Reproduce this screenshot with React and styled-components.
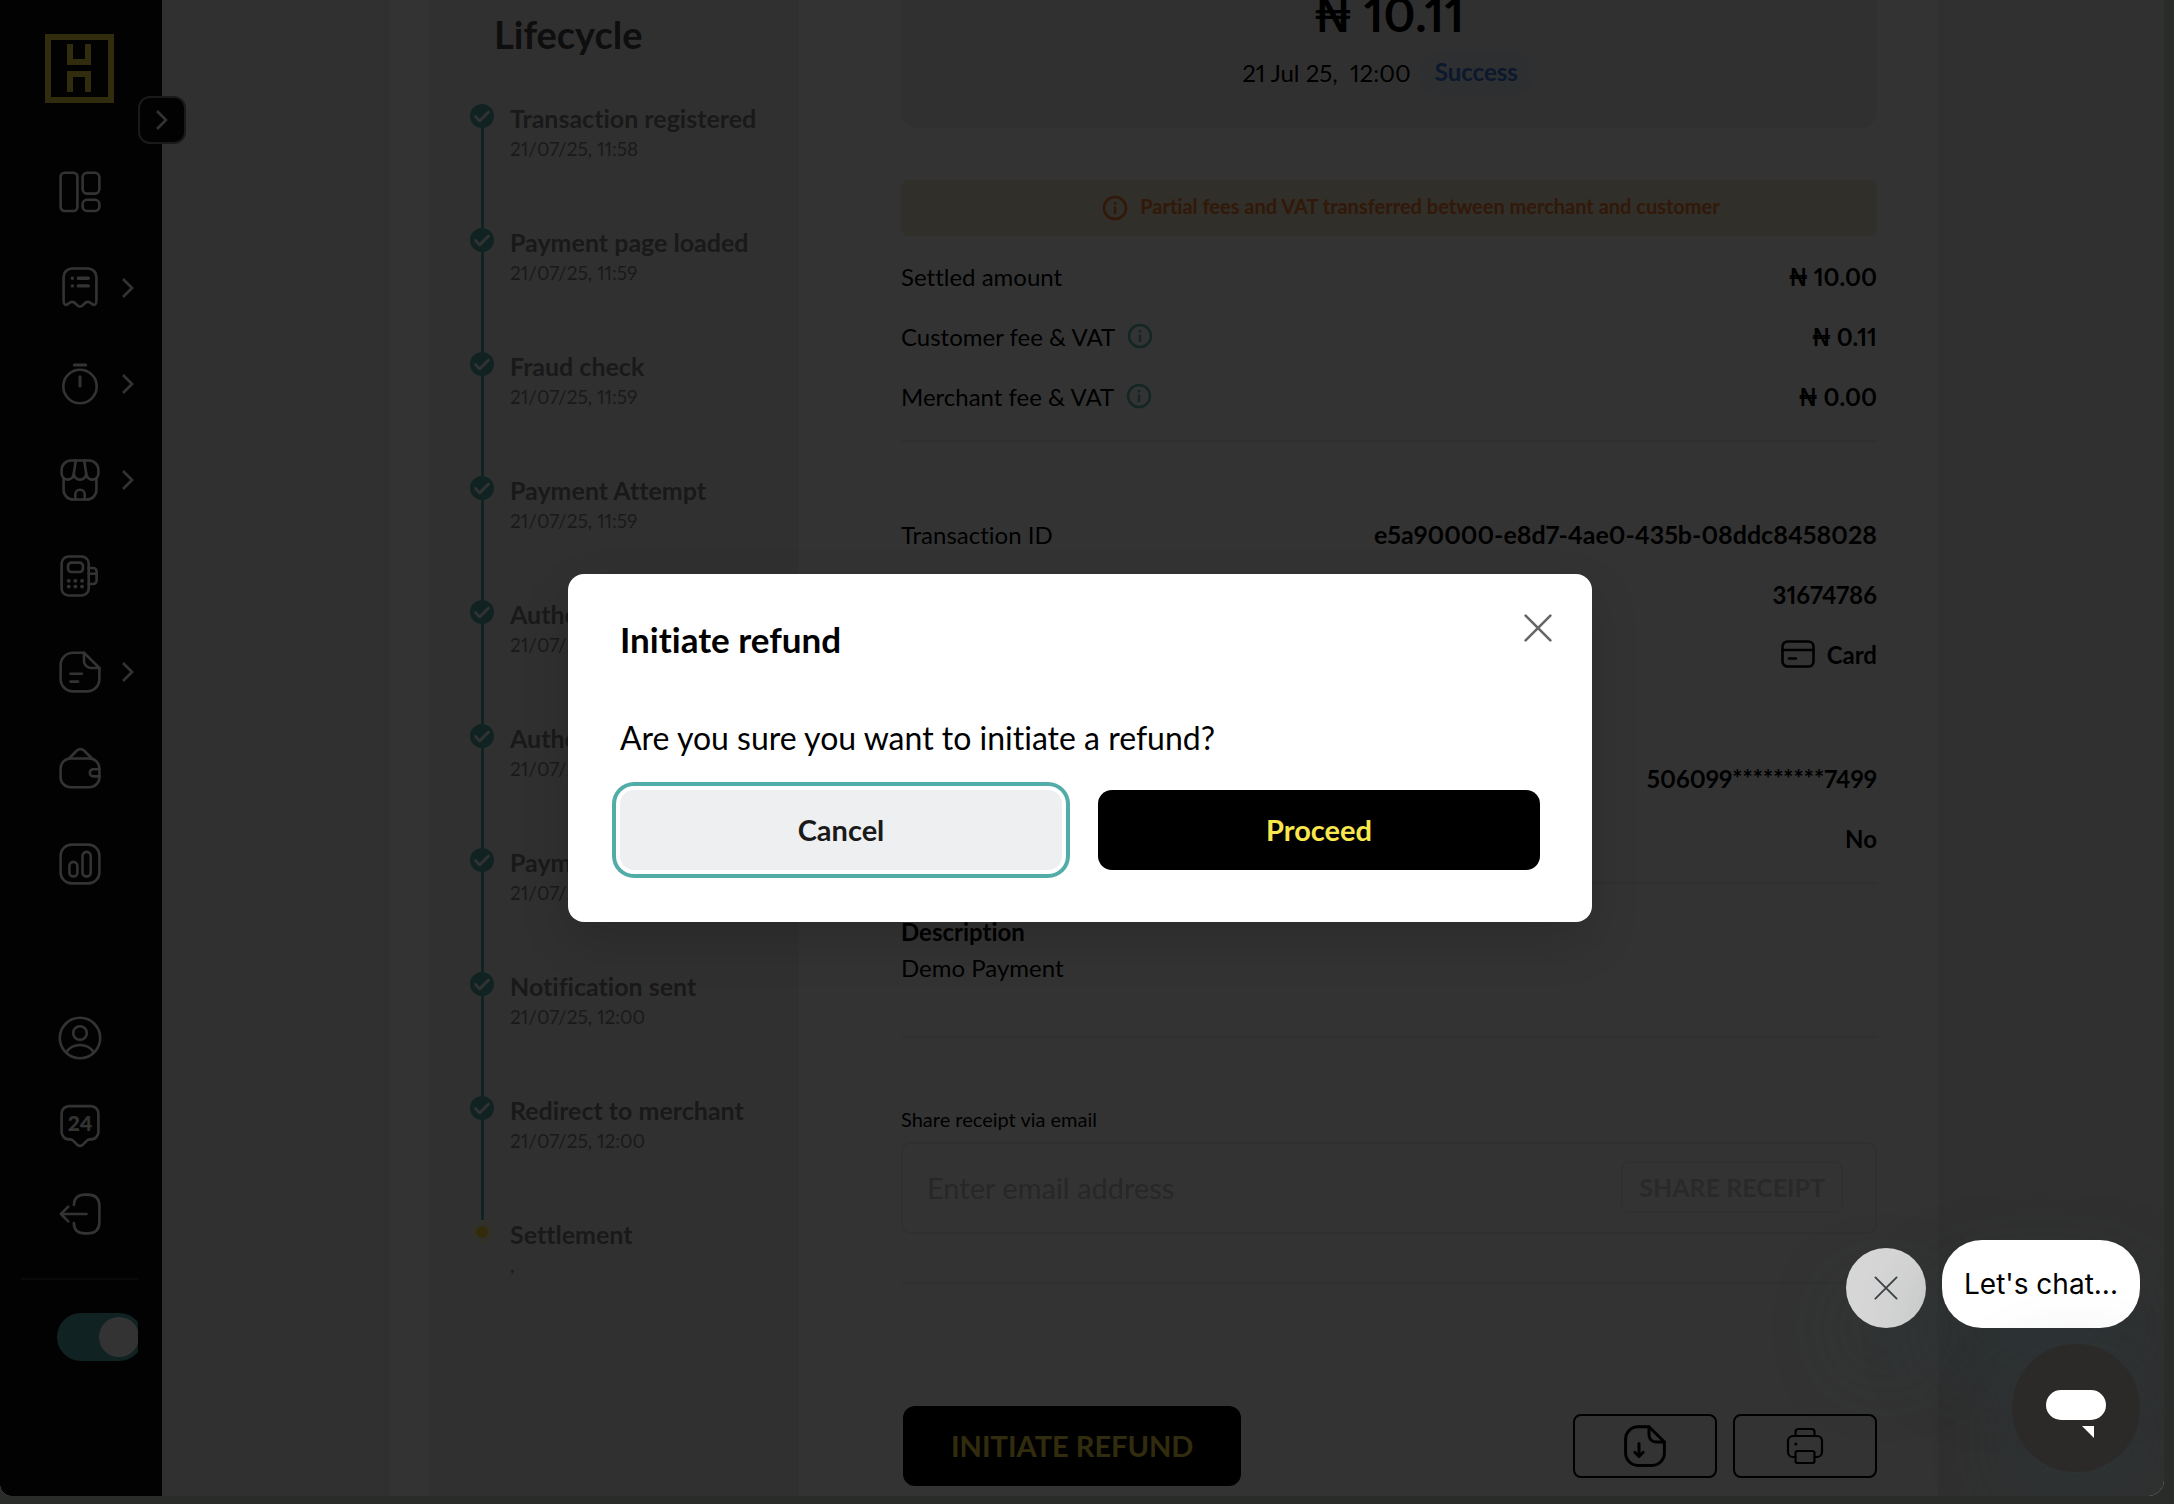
import React from 'react'
import styled, { createGlobalStyle } from 'styled-components'

const GlobalStyle = createGlobalStyle`
  * {
    box-sizing: border-box;
  }
  body {
    margin: 0;
    background: #2a2c29;
    color: #000;
    font-family: Lato, "Open Sans", sans-serif;
    font-size: 24px;
    font-variant-ligatures: none;
    font-variant-numeric: proportional-nums;
    overflow: hidden;
  }
  button, input {
    font-family: inherit;
  }
  h1, h2, p, ul, ol, dl, dd {
    margin: 0;
    padding: 0;
  }
  ul, ol {
    list-style: none;
  }
`

const navItems = [
  { name: 'Dashboard', icon: 'dashboard' },
  { name: 'Transactions', icon: 'receipt', more: true },
  { name: 'Settlements', icon: 'timer', more: true },
  { name: 'Store', icon: 'shop', more: true },
  { name: 'Terminals', icon: 'terminal' },
  { name: 'Invoices', icon: 'note', more: true },
  { name: 'Wallet', icon: 'wallet' },
  { name: 'Reports', icon: 'chart' },
]

const accountItems = [
  { name: 'Profile', icon: 'user' },
  { name: 'Support', icon: 'support' },
  { name: 'Log out', icon: 'logout' },
]

const steps = [
  { title: 'Transaction registered', date: '21/07/25, 11:58', done: true },
  { title: 'Payment page loaded', date: '21/07/25, 11:59', done: true },
  { title: 'Fraud check', date: '21/07/25, 11:59', done: true },
  { title: 'Payment Attempt', date: '21/07/25, 11:59', done: true },
  { title: 'Authentication', date: '21/07/25, 11:59', done: true },
  { title: 'Authorization', date: '21/07/25, 11:59', done: true },
  { title: 'Payment status', date: '21/07/25, 12:00', done: true },
  { title: 'Notification sent', date: '21/07/25, 12:00', done: true },
  { title: 'Redirect to merchant', date: '21/07/25, 12:00', done: true },
  { title: 'Settlement', date: ',', done: false },
]

const fees = [
  { label: 'Settled amount', value: '₦ 10.00' },
  { label: 'Customer fee & VAT', value: '₦ 0.11', info: true },
  { label: 'Merchant fee & VAT', value: '₦ 0.00', info: true },
]

const icons = {
  dashboard: (
    <>
      <rect x="2.6" y="2.8" width="16.8" height="38.2" rx="4" />
      <rect x="24.6" y="2.8" width="16.8" height="20.8" rx="4.5" />
      <rect x="24.6" y="29.8" width="16.8" height="11.2" rx="4.5" />
    </>
  ),
  receipt: (
    <>
      <path d="M5.6 34.5V11a8.5 8.5 0 0 1 8.5-8.5h15.8a8.5 8.5 0 0 1 8.5 8.5v23.5c0 4.5-2.6 5.4-5 3c-2.4-2.3-5.2-2.2-7.4.6c-2.6 3.6-5.4 3.6-8 0c-2.2-2.8-5-2.9-7.4-.6c-2.4 2.4-5 1.5-5-3z" />
      <path d="M20.3 12.3h10M20.3 19.9h10M14.3 12.3h.1M14.3 19.9h.1" strokeWidth="3.4" />
    </>
  ),
  timer: (
    <>
      <circle cx="22" cy="24.5" r="16.7" />
      <path d="M16.3 2.9h11.4M22 14.8v9.2" strokeWidth="3" />
    </>
  ),
  shop: (
    <>
      <path d="M3.6 15.5a6.1 6.1 0 0 0 12.2 0a6.2 6.2 0 0 0 12.4 0a6.1 6.1 0 0 0 12.2 0V12a9.5 9.5 0 0 0-9.5-9.5H13.1A9.5 9.5 0 0 0 3.6 12z" />
      <path d="M17.8 2.5l-2 13M26.2 2.5l2 13" />
      <path d="M5.6 20.5V32a9.5 9.5 0 0 0 9.5 9.5h13.8a9.5 9.5 0 0 0 9.5-9.5V20.5" />
      <path d="M17.3 41.5v-5a4.7 4.7 0 0 1 9.4 0v5" />
    </>
  ),
  terminal: (
    <>
      <rect x="3.6" y="2.5" width="27.1" height="39" rx="7" />
      <rect x="10" y="8.6" width="15" height="9.4" rx="3.5" />
      <path d="M30.7 14h4.4a3.5 3.5 0 0 1 3.5 3.5v9a3.5 3.5 0 0 1-3.5 3.5h-4.4M30.7 19.8h8" />
      <path d="M10.7 26.8h.1M17.3 26.8h.1M24 26.8h.1M10.7 32.6h.1M17.3 32.6h.1M24 32.6h.1" strokeWidth="3.8" />
    </>
  ),
  note: (
    <>
      <path d="M26 2.8H15A12.4 12.4 0 0 0 2.6 15.2V29a12.4 12.4 0 0 0 12.4 12.4h14A12.4 12.4 0 0 0 41.4 29V18z" />
      <path d="M26 2.8V11a7 7 0 0 0 7 7h8.4M12.5 23.8h11.4M12.5 31.6h7.6" />
    </>
  ),
  wallet: (
    <>
      <rect x="2.6" y="12.5" width="38.8" height="28.7" rx="10" />
      <path d="M11 12.5L18.5 5q4-3.6 8 0L34 12.5M41.4 23.2h-6a3.6 3.6 0 0 0 0 7.2h6" />
    </>
  ),
  chart: (
    <>
      <rect x="2.6" y="2.6" width="38.8" height="38.8" rx="11" />
      <rect x="11.4" y="19.9" width="8" height="14.5" rx="4" />
      <rect x="24.5" y="9.9" width="8.2" height="24.5" rx="4" />
    </>
  ),
  user: (
    <>
      <circle cx="22" cy="22" r="20.2" />
      <circle cx="22" cy="17" r="6.8" />
      <path d="M8.5 36Q13 29 22 29T35.5 36" />
    </>
  ),
  support: (
    <>
      <path d="M11 2.1h22a7.4 7.4 0 0 1 7.4 7.4V28a7.4 7.4 0 0 1-7.4 7.4h-1q-2 0-3.4 1.4l-3.9 4q-2.7 2.4-5.4 0l-3.9-4q-1.4-1.4-3.4-1.4h-1A7.4 7.4 0 0 1 3.6 28V9.5A7.4 7.4 0 0 1 11 2.1z" />
      <text x="22" y="27" textAnchor="middle" fontSize="21" fontWeight="900" fill="currentColor" stroke="none">24</text>
    </>
  ),
  logout: (
    <>
      <path d="M15.9 13C15.9 6 20 2.6 27 2.6h2.5C37 2.6 41.4 6.5 41.4 14v16c0 7.5-4.4 11.4-11.9 11.4H27c-7 0-11.1-3.4-11.1-10.4" />
      <path d="M28.5 22H3M10.3 14.6L2.9 22l7.4 7.4" />
    </>
  ),
  download: (
    <>
      <path d="M26 2.8H15A12.4 12.4 0 0 0 2.6 15.2V29a12.4 12.4 0 0 0 12.4 12.4h14A12.4 12.4 0 0 0 41.4 29V18z" />
      <path d="M26 2.8V11a7 7 0 0 0 7 7h8.4M16 19.5V32M11.8 28.3l4.2 4.2l4.2-4.2" />
    </>
  ),
  printer: (
    <>
      <path d="M12.5 12V8a3 3 0 0 1 3-3h13a3 3 0 0 1 3 3v4" />
      <path d="M12.5 33H10a5 5 0 0 1-5-5V17a5 5 0 0 1 5-5h24a5 5 0 0 1 5 5v11a5 5 0 0 1-5 5h-2.500" />
      <rect x="12.5" y="27" width="19" height="12" rx="2" />
      <path d="M12.8 20h.1" strokeWidth="3" />
    </>
  ),
}

const Icon = ({ name, stroke = 2.6 }) => (
  <svg
    width="44"
    height="44"
    viewBox="0 0 44 44"
    fill="none"
    stroke="currentColor"
    strokeWidth={stroke}
    strokeLinecap="round"
    strokeLinejoin="round"
    aria-hidden="true"
  >
    {icons[name]}
  </svg>
)

const Chevron = () => (
  <svg width="16" height="24" viewBox="0 0 16 24" fill="none" stroke="currentColor" strokeWidth="2.6" aria-hidden="true">
    <path d="M3 3l9 9l-9 9" />
  </svg>
)

const InfoIcon = () => (
  <svg width="26" height="26" viewBox="0 0 26 26" fill="none" stroke="currentColor" strokeWidth="2.6" aria-hidden="true">
    <circle cx="13" cy="13" r="11" />
    <path d="M13 11.5v7.5M13 7v2.4" />
  </svg>
)

const Cross = ({ size, stroke }) => (
  <svg width={size} height={size} viewBox="0 0 26 26" fill="none" stroke="currentColor" strokeWidth={stroke} strokeLinecap="round" aria-hidden="true">
    <path d="M1.5 1.5l23 23M24.5 1.5l-23 23" />
  </svg>
)

const Logo = () => (
  <svg width="69" height="69" viewBox="0 0 69 69" fill="none" stroke="#fad94d" strokeWidth="6" aria-label="Home">
    <rect x="3" y="3" width="63" height="63" />
    <path d="M25 10v18h18V10M25 58V40h18v18" />
  </svg>
)

const Check = () => (
  <svg width="24" height="24" viewBox="0 0 24 24" aria-hidden="true">
    <circle cx="12" cy="12" r="12" fill="#50aaa5" />
    <path d="M5.5 12.5l4.2 4.5l8.8-9" fill="none" stroke="#fff" strokeWidth="2.6" strokeLinecap="round" strokeLinejoin="round" />
  </svg>
)

const PendingDot = () => (
  <svg width="24" height="24" viewBox="0 0 24 24" aria-hidden="true">
    <circle cx="12" cy="12" r="12" fill="#f3eed3" />
    <circle cx="12" cy="12" r="6" fill="#fad93c" />
  </svg>
)

const CardIcon = () => (
  <svg width="34" height="28" viewBox="0 0 34 28" fill="none" stroke="currentColor" strokeWidth="2.6" strokeLinecap="round" aria-hidden="true">
    <rect x="1.5" y="1.5" width="31" height="25" rx="5" />
    <path d="M1.5 10h31M8 18.5h7" />
  </svg>
)

const ChatIcon = () => (
  <svg width="60" height="48" viewBox="0 0 60 48" fill="#fff" aria-hidden="true">
    <rect width="60" height="30" rx="15" />
    <path d="M36 36h12v12z" />
  </svg>
)

const App = () => {
  return (
    <>
      <GlobalStyle />
      <Window>
        <Sidebar>
          <LogoBox><Logo /></LogoBox>
          <Nav aria-label="Main">
            {navItems.map((item) => (
              <NavLink key={item.name} href="#" aria-label={item.name} $height={96}>
                <Icon name={item.icon} />
                {item.more && <Chevron />}
              </NavLink>
            ))}
          </Nav>
          <AccountNav aria-label="Account">
            {accountItems.map((item) => (
              <NavLink key={item.name} href="#" aria-label={item.name} $height={88}>
                <Icon name={item.icon} />
              </NavLink>
            ))}
          </AccountNav>
          <ModeRow>
            <ModeSwitch type="checkbox" role="switch" aria-label="Live mode" defaultChecked />
          </ModeRow>
          <ExpandButton type="button" aria-label="Expand menu"><Chevron /></ExpandButton>
        </Sidebar>

        <Main>
          <Sheet>
            <Lifecycle>
              <LifecycleTitle>Lifecycle</LifecycleTitle>
              <ol>
                {steps.map((step) => (
                  <Step key={step.title} $done={step.done}>
                    {step.done ? <Check /> : <PendingDot />}
                    <div>
                      <StepTitle>{step.title}</StepTitle>
                      <StepDate>{step.date}</StepDate>
                    </div>
                  </Step>
                ))}
              </ol>
            </Lifecycle>

            <Details>
              <Summary>
                <Amount>₦ 10.11</Amount>
                <Meta>
                  <MetaDate>21 Jul 25,&nbsp; 12:00</MetaDate>
                  <Badge>Success</Badge>
                </Meta>
              </Summary>
              <Notice>
                <InfoIcon />
                <span>Partial fees and VAT transferred between merchant and customer</span>
              </Notice>
              <Rows $top={10}>
                {fees.map((fee) => (
                  <Row key={fee.label}>
                    <dt>{fee.label} {fee.info && <InfoIcon />}</dt>
                    <dd>{fee.value}</dd>
                  </Row>
                ))}
              </Rows>
              <Rows $top={62}>
                <Row $large><dt>Transaction ID</dt><dd>e5a90000-e8d7-4ae0-435b-08ddc8458028</dd></Row>
                <Row><dt /><dd>31674786</dd></Row>
                <Row><dt /><dd><CardIcon /> Card</dd></Row>
                <Row $tall><dt /><dd /></Row>
                <Row><dt /><dd>506099*********7499</dd></Row>
                <Row><dt /><dd>No</dd></Row>
              </Rows>
              <Description>
                <strong>Description</strong>
                <p>Demo Payment</p>
              </Description>
              <Share>
                <label htmlFor="email">Share receipt via email</label>
                <Field>
                  <EmailInput id="email" type="email" placeholder="Enter email address" />
                  <ShareButton type="button" disabled>SHARE RECEIPT</ShareButton>
                </Field>
              </Share>
              <Actions>
                <RefundButton type="button">INITIATE REFUND</RefundButton>
                <OutlineButton type="button" aria-label="Download"><Icon name="download" stroke={3} /></OutlineButton>
                <OutlineButton type="button" aria-label="Print"><Icon name="printer" stroke={2.2} /></OutlineButton>
              </Actions>
            </Details>
          </Sheet>
        </Main>

        <Overlay>
          <Dialog role="dialog" aria-modal="true" aria-labelledby="dialog-title">
            <DialogHead>
              <DialogTitle id="dialog-title">Initiate refund</DialogTitle>
              <CloseButton type="button" aria-label="Close"><Cross size={28} stroke={2.4} /></CloseButton>
            </DialogHead>
            <DialogText>Are you sure you want to initiate a refund?</DialogText>
            <DialogButtons>
              <CancelButton type="button">Cancel</CancelButton>
              <ProceedButton type="button">Proceed</ProceedButton>
            </DialogButtons>
          </Dialog>
        </Overlay>

        <Chat>
          <ChatRow>
            <ChatClose type="button" aria-label="Close chat message"><Cross size={24} stroke={2} /></ChatClose>
            <ChatMessage type="button">Let's chat...</ChatMessage>
          </ChatRow>
          <ChatLauncher type="button" aria-label="Open chat"><ChatIcon /></ChatLauncher>
        </Chat>
      </Window>
    </>
  )
}

const Window = styled.div`
  position: relative;
  display: flex;
  height: calc(100vh - 8px);
  margin-right: 10px;
  overflow: hidden;
  border-radius: 0 0 16px 12px;
  background: #f1f1f1;
`

const Sidebar = styled.aside`
  position: relative;
  flex: none;
  display: flex;
  flex-direction: column;
  width: 162px;
  background: #0a0a0a;
  color: #fff;
`
const LogoBox = styled.div`
  height: 144px;
  padding: 34px 0 0 45px;
`
const Nav = styled.nav`
  display: flex;
  flex-direction: column;
`
const AccountNav = styled(Nav)`
  margin: 82px 24px 0 21px;
  padding-bottom: 20px;
  border-bottom: 2px solid #333;

  a {
    padding-left: 37px;
  }
`
const NavLink = styled.a`
  display: flex;
  align-items: center;
  gap: 18px;
  height: ${({ $height }) => $height}px;
  padding-left: 58px;
  color: #fff;
`
const ModeRow = styled.div`
  margin: 33px 24px 0 57px;
  overflow: hidden;
`
const ModeSwitch = styled.input`
  appearance: none;
  display: flex;
  justify-content: flex-end;
  width: 86px;
  height: 48px;
  margin: 0;
  padding: 4px;
  border-radius: 24px;
  background: #50aaa5;

  &::before {
    content: '';
    width: 40px;
    border-radius: 50%;
    background: #fff;
  }
`
const ExpandButton = styled.button`
  position: absolute;
  top: 96px;
  right: -24px;
  display: flex;
  align-items: center;
  justify-content: center;
  width: 48px;
  height: 48px;
  padding: 0;
  border: 2px solid #808080;
  border-radius: 12px;
  background: #0a0a0a;
  color: #fff;
`

const Main = styled.main`
  flex: 1;
  padding: 0 226px 0 228px;
`
const Sheet = styled.div`
  display: flex;
  min-height: 100%;
  padding-left: 40px;
  background: #fff;
`
const Lifecycle = styled.section`
  flex: none;
  width: 369px;
  padding: 12px 20px 0 40px;
  background: #f1f1f1;
`
const LifecycleTitle = styled.h2`
  margin-bottom: 48px;
  padding-left: 24px;
  color: #464646;
  font-size: 38px;
  line-height: 44px;
`
const Step = styled.li`
  display: flex;
  align-items: flex-start;
  gap: 16px;
  height: 124px;
  background: ${({ $done }) => ($done ? 'linear-gradient(#50aaa5, #50aaa5) 11px 0 / 3px 100% no-repeat' : 'none')};

  svg {
    flex: none;
  }
`
const StepTitle = styled.p`
  color: #7d7d7d;
  font-size: 25px;
  font-weight: 700;
  line-height: 28px;
`
const StepDate = styled.p`
  color: #828282;
  font-size: 19px;
  line-height: 34px;
`

const Details = styled.section`
  flex: 1;
  min-width: 0;
  padding: 0 61px 0 102px;
`
const Summary = styled.header`
  display: flex;
  flex-direction: column;
  align-items: center;
  gap: 24px;
  margin-bottom: 52px;
  padding-bottom: 32px;
  border-radius: 0 0 16px 16px;
  background: #f1f1f1;
`
const Amount = styled.h1`
  font-size: 48px;
  line-height: 28px;
`
const Meta = styled.div`
  display: flex;
  align-items: center;
  gap: 6px;
`
const MetaDate = styled.span`
  padding-bottom: 4px;
`
const Badge = styled.span`
  padding: 0 18px 4px;
  border-radius: 22px;
  background: #e2ebf6;
  color: #3c78d8;
  font-weight: 700;
  line-height: 40px;
`
const Notice = styled.div`
  display: flex;
  align-items: center;
  justify-content: center;
  gap: 12px;
  height: 56px;
  padding-left: 44px;
  border-radius: 8px;
  background: #f3e8cd;
  color: #f47a2c;
  font-size: 20px;
  font-weight: 700;

  span {
    padding-bottom: 4px;
  }
`
const Rows = styled.dl`
  padding: ${({ $top }) => $top}px 0 14px;
  border-bottom: 2px solid #ededed;
`
const Row = styled.div`
  display: flex;
  align-items: center;
  justify-content: space-between;
  height: ${({ $tall }) => ($tall ? 64 : 60)}px;

  dt, dd {
    display: flex;
    align-items: center;
    gap: 12px;
  }
  dt svg {
    color: #60bdb6;
  }
  dd {
    font-size: ${({ $large }) => ($large ? 25 : 24)}px;
    font-weight: 700;
  }
`
const Description = styled.div`
  padding: 30px 0 50px;
  border-bottom: 2px solid #ededed;
  line-height: 36px;
`
const Share = styled.div`
  padding: 69px 0 48px;
  border-bottom: 2px solid #ededed;

  label {
    display: block;
    margin-bottom: 11px;
    font-size: 20px;
    line-height: 24px;
  }
`
const Field = styled.div`
  display: flex;
  align-items: center;
  height: 92px;
  padding: 0 32px 2px 24px;
  border: 2px solid #ededed;
  border-radius: 10px;
`
const EmailInput = styled.input`
  flex: 1;
  min-width: 0;
  padding: 0;
  border: 0;
  outline: 0;
  background: none;
  font-size: 29px;

  &::placeholder {
    color: #c0c0c0;
  }
`
const ShareButton = styled.button`
  height: 52px;
  padding: 0 16px;
  border: 2px solid #f0f0f0;
  border-radius: 8px;
  background: none;
  color: #cdcdcd;
  font-size: 25px;
  font-weight: 700;
`
const Actions = styled.div`
  display: flex;
  align-items: center;
  gap: 16px;
  padding: 122px 0 10px 2px;
`
const RefundButton = styled.button`
  height: 80px;
  margin-right: auto;
  padding: 0 48px 2px;
  border: 0;
  border-radius: 12px;
  background: #000;
  color: #fad94d;
  font-size: 29px;
  font-weight: 700;
`
const OutlineButton = styled.button`
  display: flex;
  align-items: center;
  justify-content: center;
  width: 144px;
  height: 64px;
  padding: 0;
  border: 2px solid #000;
  border-radius: 8px;
  background: none;
  color: #000;
`

const Overlay = styled.div`
  position: absolute;
  inset: 0;
  display: flex;
  align-items: center;
  justify-content: center;
  padding-right: 4px;
  background: rgba(0, 0, 0, 0.8);
`
const Dialog = styled.div`
  width: 1024px;
  max-width: 90%;
  padding: 40px 52px 52px;
  border-radius: 16px;
  background: #fff;
  box-shadow: 0 20px 50px rgba(0, 0, 0, 0.14);
`
const DialogHead = styled.div`
  display: flex;
  align-items: flex-start;
  justify-content: space-between;
  margin-right: -12px;
`
const DialogTitle = styled.h2`
  font-size: 35px;
  line-height: 50px;
`
const CloseButton = styled.button`
  display: flex;
  padding: 0;
  border: 0;
  background: none;
  color: #666;
`
const DialogText = styled.p`
  margin: 50px 0 28px;
  font-size: 32px;
  line-height: 48px;
`
const DialogButtons = styled.div`
  display: grid;
  grid-template-columns: 1fr 1fr;
  gap: 36px;
`
const DialogButton = styled.button`
  height: 80px;
  padding: 0 0 2px;
  border: 0;
  border-radius: 14px;
  font-size: 29px;
  font-weight: 700;
`
const CancelButton = styled(DialogButton)`
  background: #eeeff1;
  color: #1a1a1a;
  box-shadow: 0 0 0 4px #fff, 0 0 0 8px #52ada8;
`
const ProceedButton = styled(DialogButton)`
  background: #000;
  color: #fae64d;
`

const Chat = styled.div`
  position: absolute;
  right: 24px;
  bottom: 24px;
  display: flex;
  flex-direction: column;
  align-items: flex-end;
  gap: 16px;
`
const ChatRow = styled.div`
  display: flex;
  align-items: flex-end;
  gap: 16px;
`
const ChatClose = styled.button`
  display: flex;
  align-items: center;
  justify-content: center;
  width: 80px;
  height: 80px;
  padding: 0;
  border: 0;
  border-radius: 50%;
  background: #d6d6d6;
  color: #3c4346;
  box-shadow: 0 40px 80px rgba(40, 58, 62, 0.3);
`
const ChatMessage = styled.button`
  height: 88px;
  padding: 0 22px;
  border: 0;
  border-radius: 40px;
  background: #fff;
  color: #000;
  font-family: Inter, sans-serif;
  font-size: 28px;
  box-shadow: 0 40px 80px rgba(40, 58, 62, 0.4);
`
const ChatLauncher = styled.button`
  display: flex;
  align-items: center;
  justify-content: center;
  width: 128px;
  height: 128px;
  padding: 12px 0 0;
  border: 0;
  border-radius: 50%;
  background: #2c2a28;
  box-shadow: 0 30px 80px rgba(40, 58, 62, 0.4);
`

export default App
